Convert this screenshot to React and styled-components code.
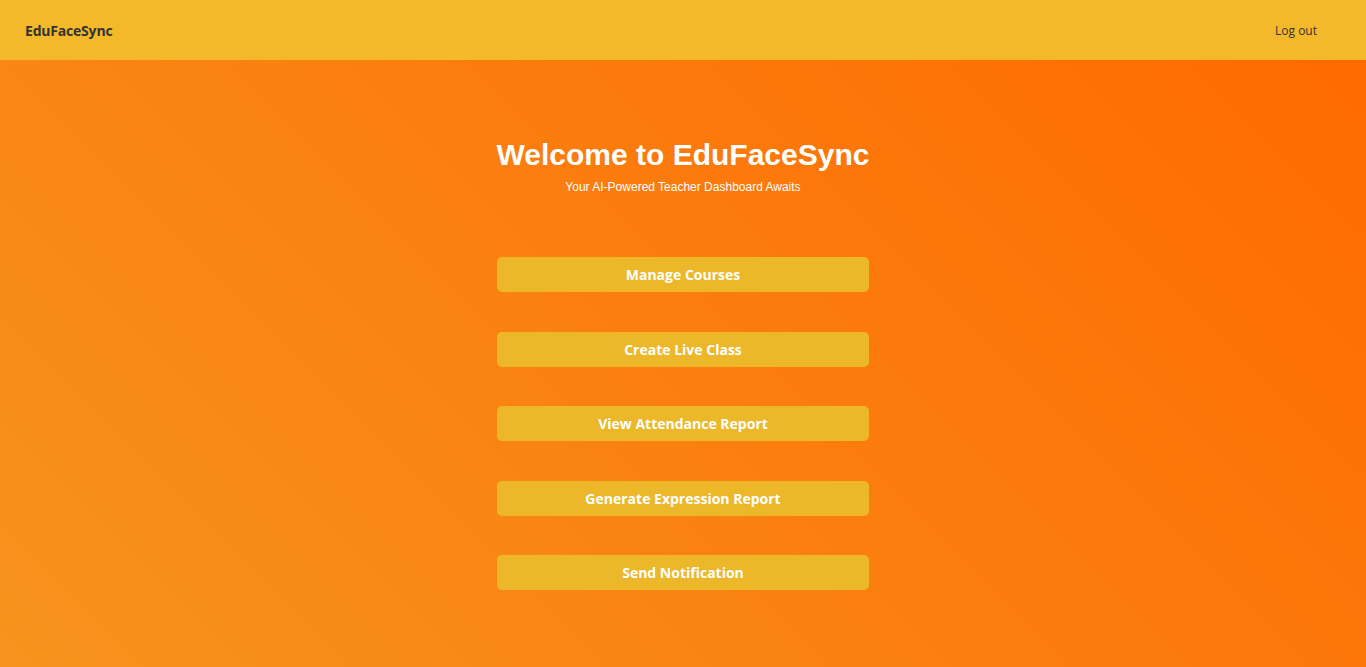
import React from "react";
import styled, { createGlobalStyle } from "styled-components";

const Global = createGlobalStyle`
  html, body { margin: 0; padding: 0; height: 100%; }
  body { font-family: "Open Sans", "Noto Sans", sans-serif; }
  #root { min-height: 100vh; display: flex; flex-direction: column; }
`;

const Header = styled.header`
  height: 60px;
  flex: none;
  background: #f3b92b;
  display: flex;
  align-items: center;
  justify-content: space-between;
  padding: 0 49px 0 25px;
`;

const Logo = styled.div`
  font-family: "Open Sans", sans-serif;
  font-weight: 700;
  font-size: 14px;
  color: #333333;
  letter-spacing: -0.2px;
`;

const LogOut = styled.button`
  background: none;
  border: none;
  padding: 0;
  font-family: "Open Sans", sans-serif;
  font-size: 12px;
  color: #333333;
  cursor: pointer;
`;

const Main = styled.main`
  flex: 1;
  background: linear-gradient(45deg, #f7931e 0%, #ff6a00 100%);
  display: flex;
  flex-direction: column;
  align-items: center;
  padding-top: 77px;
`;

const Title = styled.h1`
  margin: 0;
  font-family: "Liberation Sans", Arial, sans-serif;
  font-weight: 700;
  font-size: 30px;
  line-height: 36px;
  color: #ffffff;
`;

const Subtitle = styled.p`
  margin: 7px 0 0;
  font-family: "Liberation Sans", Arial, sans-serif;
  font-size: 12px;
  line-height: 14px;
  color: #ffffff;
`;

const Actions = styled.div`
  margin-top: 63px;
  display: flex;
  flex-direction: column;
  gap: 39.5px;
  width: 372px;
`;

const ActionButton = styled.button`
  height: 35px;
  width: 100%;
  border: none;
  border-radius: 5px;
  background: #edb72a;
  color: #ffffff;
  font-family: "Open Sans", sans-serif;
  font-weight: 700;
  font-size: 14px;
  cursor: pointer;
`;

const actions = [
  "Manage Courses",
  "Create Live Class",
  "View Attendance Report",
  "Generate Expression Report",
  "Send Notification",
];

export default function App() {
  return (
    <>
      <Global />
      <Header>
        <Logo>EduFaceSync</Logo>
        <LogOut>Log out</LogOut>
      </Header>
      <Main>
        <Title>Welcome to EduFaceSync</Title>
        <Subtitle>Your AI-Powered Teacher Dashboard Awaits</Subtitle>
        <Actions>
          {actions.map((a) => (
            <ActionButton key={a}>{a}</ActionButton>
          ))}
        </Actions>
      </Main>
    </>
  );
}
